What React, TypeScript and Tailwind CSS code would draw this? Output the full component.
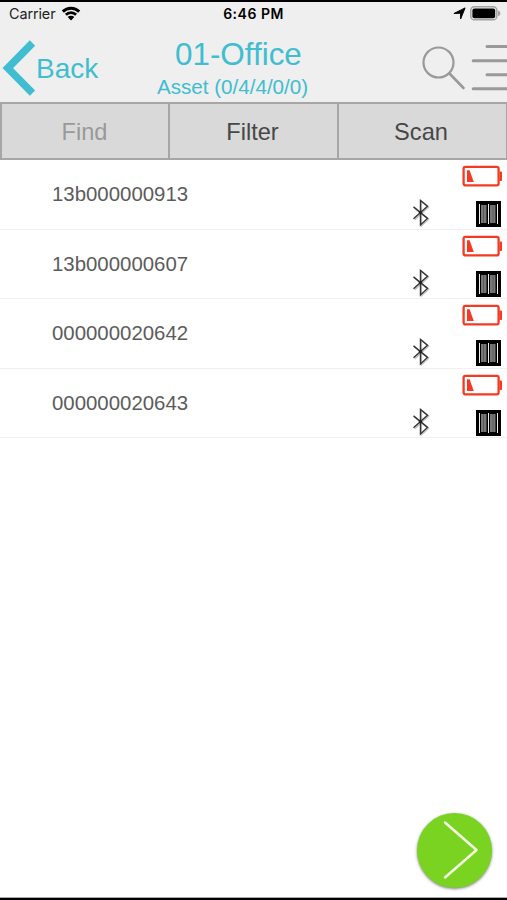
import React from "react";

const assets = ["13b000000913", "13b000000607", "000000020642", "000000020643"];

function WifiIcon() {
  return (
    <svg width="20" height="15" viewBox="0 0 20 15" fill="none">
      <path d="M1.8 5.6a11.6 11.6 0 0 1 16.4 0" stroke="#000" strokeWidth="2.9" />
      <path d="M4.9 8.8a7.2 7.2 0 0 1 10.2 0" stroke="#000" strokeWidth="2.7" />
      <path d="M10 14.4 6.7 11.1a4.7 4.7 0 0 1 6.6 0Z" fill="#000" />
    </svg>
  );
}

function StatusBattery() {
  return (
    <svg width="31" height="15" viewBox="0 0 31 15" fill="none">
      <rect x="0.8" y="0.8" width="26" height="13" rx="3.6" stroke="#a3a3a3" strokeWidth="1.5" />
      <rect x="2.4" y="2.4" width="22.8" height="9.8" rx="2" fill="#000" />
      <path d="M28 4.5c1.5.5 2.3 1.5 2.3 2.9s-.8 2.3-2.3 2.8Z" fill="#a3a3a3" />
    </svg>
  );
}

function LowBattery() {
  return (
    <svg width="41" height="22" viewBox="0 0 41 22" fill="none">
      <rect x="1.6" y="1.8" width="35" height="18.6" rx="1.8" stroke="#f23b22" strokeWidth="2.3" />
      <path d="M37.5 6.5h1.6q.9 0 .9.9v7.600q0 .9-.9.9H37.500Z" fill="#f23b22" />
      <path d="M5 5.200h2.600L11.800 17H5Z" fill="#f23b22" />
    </svg>
  );
}

function Bluetooth() {
  return (
    <svg width="18" height="29" viewBox="0 0 18 29" fill="none">
      <path
        d="m2.600 9 14 11.200-7.200 6.600V2.200l7.200 5.900L2.600 20.900"
        stroke="#c4c4c4"
        strokeWidth="1.5"
      />
      <path
        d="m1.500 7.900 14 11.500-7 6.600V1.500l7 5.700L1.500 19.800"
        stroke="#333"
        strokeWidth="1.4"
      />
      <circle cx="8.5" cy="13.600" r="1.7" fill="#222" />
    </svg>
  );
}

function Barcode() {
  return (
    <svg width="25" height="26" viewBox="0 0 25 26" fill="none">
      <path d="M0 0h25v26H0Z" fill="#000" />
      <path d="M5 4h5.500v18H5ZM14 4h5.500v18H14Z" fill="#777" />
      <path d="M3.500 3v20M12.500 3v20M21.500 3v20" stroke="#eee" strokeWidth="1" />
      <path d="M7.500 4v18M17 4v18" stroke="#555" strokeWidth="0.8" />
    </svg>
  );
}

function StatusBar() {
  return (
    <div className="flex h-[22px] items-center justify-between pl-[9px] pr-[6px] font-['Inter',sans-serif] text-[#222]">
      <div className="flex w-[160px] items-center gap-[6px]">
        <span className="pt-px text-[14.4px] tracking-[-0.1px]">Carrier</span>
        <WifiIcon />
      </div>
      <span className="mr-[3px] text-[14px] font-semibold tracking-[0.5px] text-black">
        6:46 PM
      </span>
      <div className="flex w-[160px] items-center justify-end gap-[4px]">
        <svg width="13" height="13" viewBox="0 0 13 13">
          <path
            d="M12.1.9 7.600 12V6.200L.9 6.500Z"
            fill="#000"
            stroke="#000"
            strokeWidth="1"
            strokeLinejoin="round"
          />
        </svg>
        <StatusBattery />
      </div>
    </div>
  );
}

function NavBar() {
  return (
    <div className="flex h-[78px]">
      <div className="flex w-[157px] pl-[2px] pt-[15px] text-[#40bdd0]">
        <svg width="34" height="58" viewBox="0 0 34 58" fill="none">
          <path
            d="M30.500 4 5.800 29.100 30.500 54.200"
            stroke="currentColor"
            strokeWidth="7.500"
          />
        </svg>
        <span className="pt-[10px] text-[28px] leading-[40px]">Back</span>
      </div>
      <div className="flex w-[166px] flex-col pt-[11px] text-[#40bdd0]">
        <span className="whitespace-nowrap pl-[18px] text-[31.4px] leading-[40px]">01-Office</span>
        <span className="whitespace-nowrap text-[20.6px] leading-[24px]">
          Asset (0/4/4/0/0)
        </span>
      </div>
      <div className="flex flex-1 justify-end">
        <svg width="90" height="78" viewBox="0 0 90 78" fill="none" stroke="#999" strokeLinecap="round">
          <circle cx="21.5" cy="38.5" r="15" strokeWidth="2.2" />
          <path d="M32.500 49.500 46.500 64" strokeWidth="2.6" />
          <path d="M70 22.500h24M56.200 36.700H94M70 50.800h24M56.200 64.700H94" strokeWidth="3" />
        </svg>
      </div>
    </div>
  );
}

function App() {
  return (
    <div className="flex h-[900px] w-[507px] flex-col overflow-hidden border-b-2 border-t-2 border-black bg-white font-['Liberation_Sans',sans-serif]">
      <header className="h-[100px] shrink-0 bg-[#efefef]">
        <StatusBar />
        <NavBar />
      </header>
      <div className="flex h-[58px] shrink-0 border-y-2 border-l-2 border-r border-[#a6a6a6] bg-[#d9d9d9] text-[23.6px] text-[#474747]">
        <button className="w-[166px] pr-px pt-[3px] text-[#999]">Find</button>
        <button className="w-[169px] border-l-2 border-[#a6a6a6] pr-[2px] pt-[3px]">Filter</button>
        <button className="flex-1 border-l-2 border-[#a6a6a6] pr-[3px] pt-[3px]">Scan</button>
      </div>
      <ul>
        {assets.map((id) => (
          <li
            key={id}
            className="flex h-[69.6px] justify-between border-b border-[#f0f0f0] pl-[52px] pr-[4px]"
          >
            <span className="pt-[20px] text-[20.4px] leading-[28px] text-[#5c5c5c]">{id}</span>
            <div className="flex">
              <div className="pt-[39px]">
                <Bluetooth />
              </div>
              <div className="flex w-[73px] flex-col items-end">
                <div className="mt-[5px]">
                  <LowBattery />
                </div>
                <div className="mr-[2px] mt-[14px]">
                  <Barcode />
                </div>
              </div>
            </div>
          </li>
        ))}
      </ul>
      <div className="mt-auto flex justify-end border-b border-[#aaa] pb-[9px] pr-[15px]">
        <button className="size-[75px] rounded-full bg-[#7ad321] shadow-[0_1px_3px_rgba(0,0,0,0.5)]">
          <svg width="75" height="75" viewBox="0 0 75 75" fill="none">
            <path
              d="M28 9.500 59.500 37 28 64.500"
              stroke="#f6ffe6"
              strokeWidth="2.4"
              strokeLinecap="round"
              strokeLinejoin="round"
            />
          </svg>
        </button>
      </div>
    </div>
  );
}

export default App;
